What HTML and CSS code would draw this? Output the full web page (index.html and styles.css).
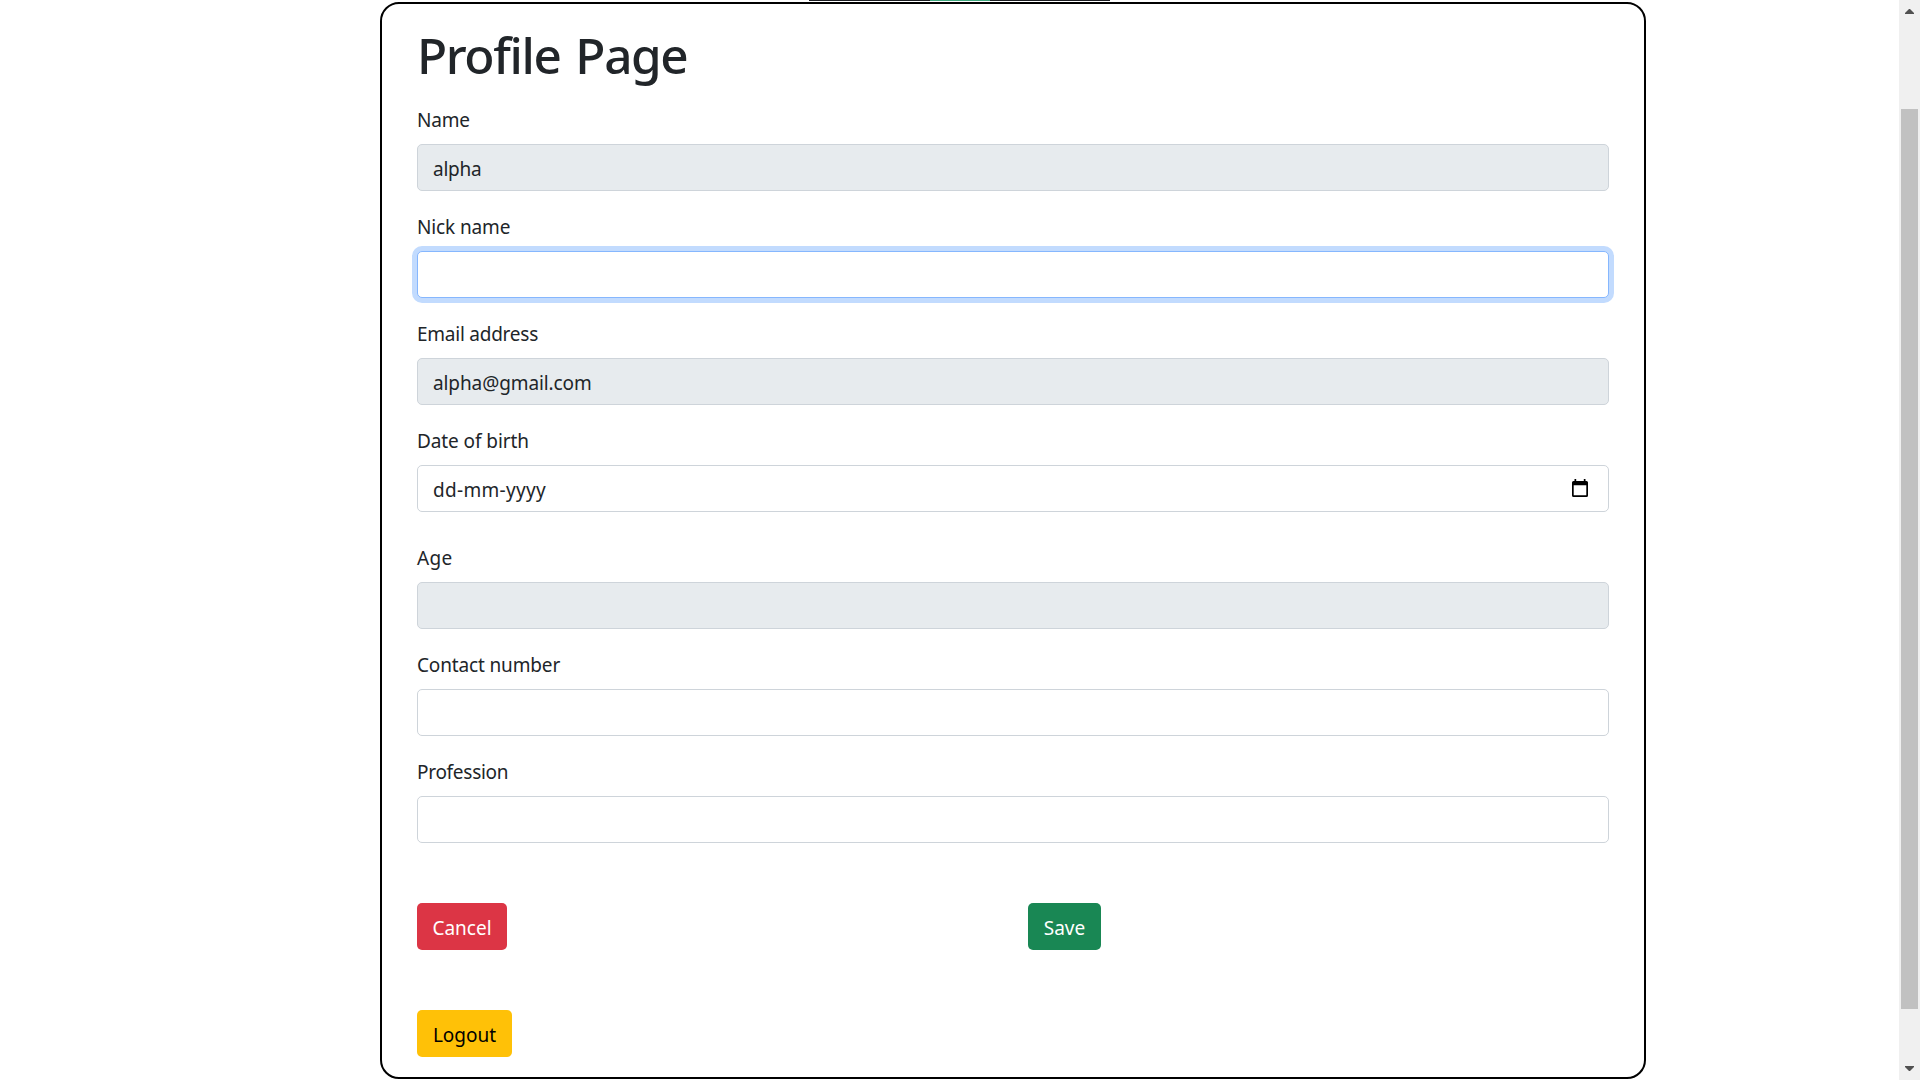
FILE: index.html
```html
<!DOCTYPE html>
<html lang="en">
<head>
<meta charset="utf-8">
<title>Profile Page</title>
<link rel="stylesheet" href="styles.css">
</head>
<body>
<div class="share-bar"><span class="share-bar-tab"></span></div>
<main class="page">
  <form class="card">
    <h1 class="title">Profile Page</h1>
    <div class="field">
      <label class="label" for="name"><span class="t-name">Name</span></label>
      <input class="control t-alpha" id="name" value="alpha" disabled>
    </div>
    <div class="field">
      <label class="label" for="nick"><span class="t-nick">Nick name</span></label>
      <input class="control control-active" id="nick">
    </div>
    <div class="field">
      <label class="label" for="email"><span class="t-email">Email address</span></label>
      <input class="control t-mail" id="email" value="alpha@gmail.com" disabled>
    </div>
    <div class="field field-date">
      <label class="label"><span class="t-date">Date of birth</span></label>
      <div class="control control-date">
        <span class="t-dmy">dd-mm-yyyy</span>
        <svg class="calendar" width="16" height="18" viewBox="0 0 16 18">
          <path fill="#000" fill-rule="evenodd" d="M2.5 0h1.7v2h7.6V0h1.7v2h1q1.5 0 1.5 1.5v13q0 1.5-1.5 1.5h-13Q0 18 0 16.500V3.500Q0 2 1.500 2h1zM1.700 6.200v10h12.600v-10z"/>
        </svg>
      </div>
    </div>
    <div class="field">
      <label class="label" for="age"><span class="t-age">Age</span></label>
      <input class="control" id="age" disabled>
    </div>
    <div class="field">
      <label class="label" for="contact"><span class="t-contact">Contact number</span></label>
      <input class="control" id="contact">
    </div>
    <div class="field">
      <label class="label" for="profession"><span class="t-profession">Profession</span></label>
      <input class="control" id="profession">
    </div>
    <div class="actions">
      <div><button type="button" class="btn btn-cancel">Cancel</button></div>
      <div><button type="button" class="btn btn-save">Save</button></div>
    </div>
    <div class="actions">
      <div><button type="button" class="btn btn-logout">Logout</button></div>
    </div>
  </form>
</main>
<aside class="scrollbar">
  <svg width="9" height="5" viewBox="0 0 9 5"><path fill="#505050" d="M4 0h1l4 4v1H0V4z"/></svg>
  <div class="thumb"></div>
  <svg width="9" height="5" viewBox="0 0 9 5"><path fill="#505050" d="M4 5h1l4-4V0H0v1z"/></svg>
</aside>
</body>
</html>
```
FILE: styles.css
```css
* { box-sizing: border-box; }
body {
  margin: 0;
  height: 1080px;
  display: flex;
  overflow: hidden;
  background: #fff;
  color: #212529;
  font: 400 19px/30px "Noto Sans", "Open Sans", sans-serif;
}
.page { flex: 1; padding: 2px 253px 0 380px; }
.card {
  height: 1077px;
  margin: 0;
  padding: 20px 35px;
  border: 2px solid #000;
  border-radius: 19px;
}
.title {
  height: 60px;
  margin: 0 0 20px;
  padding-top: 1px;
  font-size: 49.5px;
  line-height: 60px;
  font-weight: 540;
  letter-spacing: -1.4px;
  word-spacing: 3.5px;
  white-space: nowrap;
}
.field { margin-bottom: 20px; }
.field-date { margin-bottom: 30px; }
.label { display: block; height: 30px; margin-bottom: 10px; padding-top: 1px; white-space: nowrap; }
.control {
  display: block;
  width: 100%;
  height: 47px;
  padding: 9px 15px 7px;
  border: 1px solid #ced4da;
  border-radius: 5px;
  background: #fff;
  color: #212529;
  font: inherit;
  line-height: 29px;
  outline: none;
}
.control:disabled { background: #e7ebee; opacity: 1; }
.control-active { border-color: #86b7fe; box-shadow: 0 0 0 5px #c2dbfe; }
.control-date { display: flex; justify-content: space-between; align-items: center; padding: 10px 20px 6px 15px; }
.calendar { margin-bottom: 5px; }
.t-name { letter-spacing: -0.2px; }
.t-nick { letter-spacing: -0.13px; }
.t-email { letter-spacing: -0.24px; }
.t-date { letter-spacing: -0.09px; }
.t-age { letter-spacing: 0.3px; }
.t-contact { letter-spacing: -0.15px; }
.t-profession { letter-spacing: -0.28px; }
.t-alpha { letter-spacing: -0.25px; }
.t-mail { letter-spacing: -0.1px; }
.t-dmy { letter-spacing: 0.3px; }
.actions { display: grid; grid-template-columns: 611px 1fr; margin: 0 0 60px; height: 47px; }
.field + .actions { margin-top: 60px; }
.btn {
  height: 47px;
  padding: 2px 0 0;
  border: 0;
  border-radius: 5px;
  font: inherit;
  color: #fff;
}
.btn-cancel { width: 90px; background: #dc3545; }
.btn-save { width: 73px; background: #198754; }
.btn-logout { width: 95px; background: #ffc107; color: #000; }
.scrollbar {
  width: 21px;
  height: 1080px;
  padding: 9px 2px;
  display: flex;
  flex-direction: column;
  justify-content: space-between;
  align-items: center;
  background: #f0f0f0;
}
.thumb { width: 17px; height: 900px; margin-top: 38px; background: #c1c1c1; }
.share-bar {
  position: absolute;
  top: 0;
  left: 809px;
  width: 301px;
  height: 1px;
  display: flex;
  justify-content: center;
  background: #1b1c20;
}
.share-bar-tab { width: 60px; height: 1px; background: #3da67c; }
```
